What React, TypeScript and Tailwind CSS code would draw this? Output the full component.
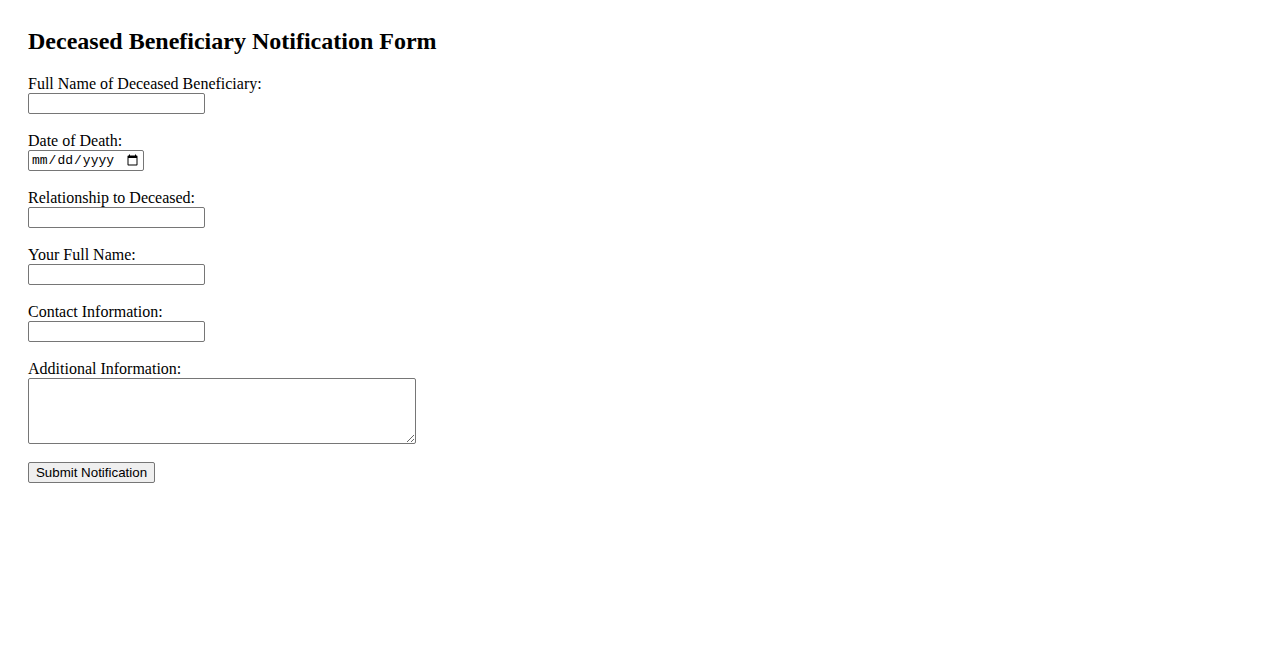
const fields = [
  { id: "deceasedName", label: "Full Name of Deceased Beneficiary:", type: "text" },
  { id: "dateOfDeath", label: "Date of Death:", type: "date" },
  { id: "relationship", label: "Relationship to Deceased:", type: "text" },
  { id: "yourName", label: "Your Full Name:", type: "text" },
  { id: "contact", label: "Contact Information:", type: "text" },
];

export default function App() {
  return (
    <div className="min-h-screen bg-white px-7 pt-7 text-black font-['Liberation_Serif',serif]">
      <h2 className="mb-[21px] text-[24px] font-bold leading-[26px]">
        Deceased Beneficiary Notification Form
      </h2>
      <form className="flex flex-col items-start" onSubmit={(e) => e.preventDefault()}>
        {fields.map((f) => (
          <div key={f.id} className="mb-[18px] flex flex-col items-start">
            <label htmlFor={f.id} className="block h-[18px] text-[16px] leading-[18px]">
              {f.label}
            </label>
            {f.type === "date" ? (
              <input
                id={f.id}
                type="date"
                className="box-border h-[21px] w-[116px] rounded-[2px] border border-[#767676] bg-white px-[2px] py-0 font-['Liberation_Mono',monospace] text-[13px] text-black"
              />
            ) : (
              <input
                id={f.id}
                type="text"
                className="box-border h-[21px] w-[177px] rounded-[2px] border border-[#767676] bg-white px-[2px] py-[1px] font-['Liberation_Sans',sans-serif] text-[13px]"
              />
            )}
          </div>
        ))}
        <div className="mb-[18px] flex flex-col items-start">
          <label htmlFor="additional" className="block h-[18px] text-[16px] leading-[18px]">
            Additional Information:
          </label>
          <textarea
            id="additional"
            className="box-border h-[66px] w-[388px] resize rounded-[2px] border border-[#767676] bg-white px-[2px] py-[1px] font-['Liberation_Mono',monospace] text-[13px]"
          />
        </div>
        <button
          type="submit"
          className="box-border h-[21px] w-[127px] rounded-[2px] border border-[#767676] bg-[#efefef] px-[6px] font-['Liberation_Sans',sans-serif] text-[13.33px] leading-[19px] text-black"
        >
          Submit Notification
        </button>
      </form>
    </div>
  );
}
